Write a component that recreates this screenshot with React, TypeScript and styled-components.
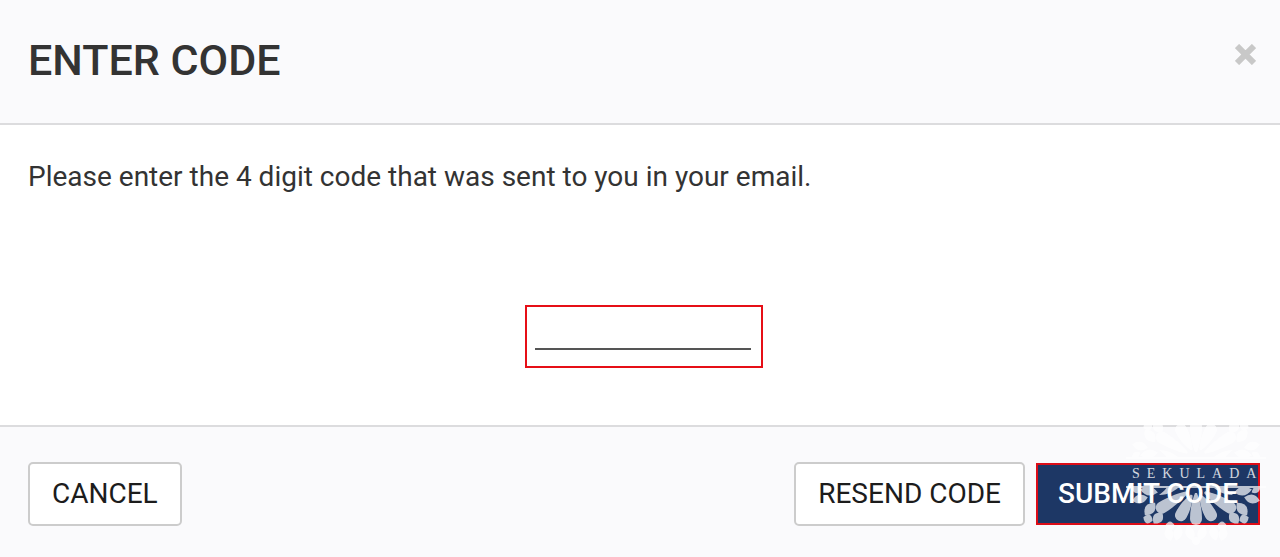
import React, { useState } from "react";
import styled, { createGlobalStyle, css } from "styled-components";

const GlobalStyle = createGlobalStyle`
  *, *::before, *::after { box-sizing: border-box; }
  body {
    margin: 0;
    background: #fafafc;
    color: #333;
    font-family: Roboto, "Liberation Sans", sans-serif;
    font-size: 28px;
    line-height: 36px;
  }
`;

const Dialog = styled.main`
  position: relative;
  display: flex;
  flex-direction: column;
  min-height: 100vh;
`;

const Header = styled.header`
  display: flex;
  justify-content: space-between;
  align-items: flex-start;
  padding: 32px 24px 35px 28px;
  border-bottom: 2px solid #dcdcde;
`;

const Title = styled.h1`
  margin: 0;
  font-size: 43px;
  line-height: 56px;
  font-weight: 500;
`;

const CloseButton = styled.button`
  display: flex;
  margin: 12px 0 0;
  padding: 0;
  border: 0;
  background: none;
  color: #c8c8c8;
  cursor: pointer;
`;

const Body = styled.form`
  display: flex;
  flex: 1;
  flex-direction: column;
  align-items: center;
  gap: 110px;
  padding: 34px 20px 57px 28px;
  background: #fff;
`;

const Prompt = styled.label`
  align-self: stretch;
`;

const CodeFrame = styled.div`
  padding: 4px 10px 16px 8px;
  border: 2px solid #e60f17;
`;

const CodeInput = styled.input`
  display: block;
  width: 216px;
  height: 39px;
  padding: 0;
  border: 0;
  border-bottom: 2px solid #555;
  outline: 0;
  background: transparent;
  color: inherit;
  font: inherit;
  text-align: center;
`;

const Footer = styled.footer`
  display: flex;
  align-items: center;
  gap: 11px;
  padding: 35px 20px 31px 28px;
  border-top: 2px solid #dcdcde;
`;

const Button = styled.button<{ $primary?: boolean }>`
  height: 64px;
  padding: 0 22px;
  border: 2px solid #ccc;
  border-radius: 5px;
  background: #fff;
  color: #1c1c1c;
  font: inherit;
  white-space: nowrap;
  cursor: pointer;

  ${({ $primary }) =>
    $primary &&
    css`
      height: 62px;
      padding: 0 20px;
      border-color: #dc0d18;
      border-radius: 0;
      background: #1d3765;
      color: #fff;
      font-weight: 500;
    `}
`;

const Spacer = styled.span`
  flex: 1;
`;

const Watermark = styled.svg`
  position: absolute;
  right: 14px;
  bottom: 12px;
  width: 140px;
  height: 130px;
  overflow: visible;
  fill: #fff;
  pointer-events: none;
`;

const WatermarkText = styled.text`
  font-family: "Liberation Serif", serif;
  font-size: 14px;
  letter-spacing: 7px;
`;

// Pointed leaves on one side of the rosette: [x, y, half length, bulge, rotation].
const leaves: number[][] = [
  [-47, 4, 9, 9, 10],
  [-60, 3, 5, 6, 30],
  [-56, 12, 8, 9, -12],
  [-46, 22, 8, 10, -50],
  [-48, 32, 5, 9, 20],
  [-38, 31, 7, 10, -52],
  [-26, 39, 5, 9, 0],
  [-27, 47, 7, 9, 75],
  [-18, 46, 8, 9, -75],
  [-6, 46, 8, 9, 70],
];

// A petal that widens from its foot to a round end.
const petal = (foot: number, end: number, r: number) =>
  `M-1 ${foot}C-3 ${foot + 5} ${-r} ${end - 18} ${-r} ${end - r}A${r} ${r} 0 0 0 ${r} ${end - r}C${r} ${end - 18} 3 ${foot + 5} 1 ${foot}Z`;

const sidePetals = [
  { angle: 28, d: petal(9, 38, 6) },
  { angle: 59, d: petal(10, 46, 6) },
];

function HalfRosette() {
  return (
    <>
      <path d={petal(6, 38, 6)} />
      {[1, -1].map((side) => (
        <g key={side} transform={`scale(${side} 1)`}>
          {sidePetals.map(({ angle, d }) => (
            <path key={angle} d={d} transform={`rotate(${angle})`} />
          ))}
          {leaves.map(([x, y, r, bulge, angle]) => (
            <path
              key={`${x},${y}`}
              d={`M${-r} 0Q0 ${-bulge} ${r} 0Q0 ${bulge} ${-r} 0Z`}
              transform={`translate(${x} ${y}) rotate(${angle})`}
            />
          ))}
          <path d="M-17 0C-20 3-27 8-37 8C-33 5-30 2-29 0Z" />
        </g>
      ))}
      <ellipse cy="54" rx="4" ry="4" />
      <path d="M-70-1H70V1H-70Z" />
    </>
  );
}

export default function App() {
  const [code, setCode] = useState("");

  return (
    <>
      <GlobalStyle />
      <Dialog>
        <Header>
          <Title>ENTER CODE</Title>
          <CloseButton type="button" aria-label="Close">
            <svg width="21" height="21" viewBox="0 0 21 21" fill="none" aria-hidden="true">
              <path d="M2 2L19 19M19 2L2 19" stroke="currentColor" strokeWidth="6" />
            </svg>
          </CloseButton>
        </Header>
        <Body id="code-form" onSubmit={(event) => event.preventDefault()}>
          <Prompt htmlFor="code">Please enter the 4 digit code that was sent to you in your email.</Prompt>
          <CodeFrame>
            <CodeInput
              id="code"
              inputMode="numeric"
              maxLength={4}
              value={code}
              onChange={(event) => setCode(event.target.value)}
            />
          </CodeFrame>
        </Body>
        <Footer>
          <Button type="button">CANCEL</Button>
          <Spacer />
          <Button type="button">RESEND CODE</Button>
          <Button type="submit" form="code-form" $primary>
            SUBMIT CODE
          </Button>
        </Footer>
        <Watermark viewBox="0 0 140 130" aria-hidden="true">
          <g opacity="0.7">
            <g transform="translate(70 43) scale(1 -1)">
              <HalfRosette />
            </g>
            <g transform="translate(70 72)">
              <HalfRosette />
            </g>
          </g>
          <WatermarkText x="6" y="63" opacity="0.8">SEKULADA</WatermarkText>
        </Watermark>
      </Dialog>
    </>
  );
}
